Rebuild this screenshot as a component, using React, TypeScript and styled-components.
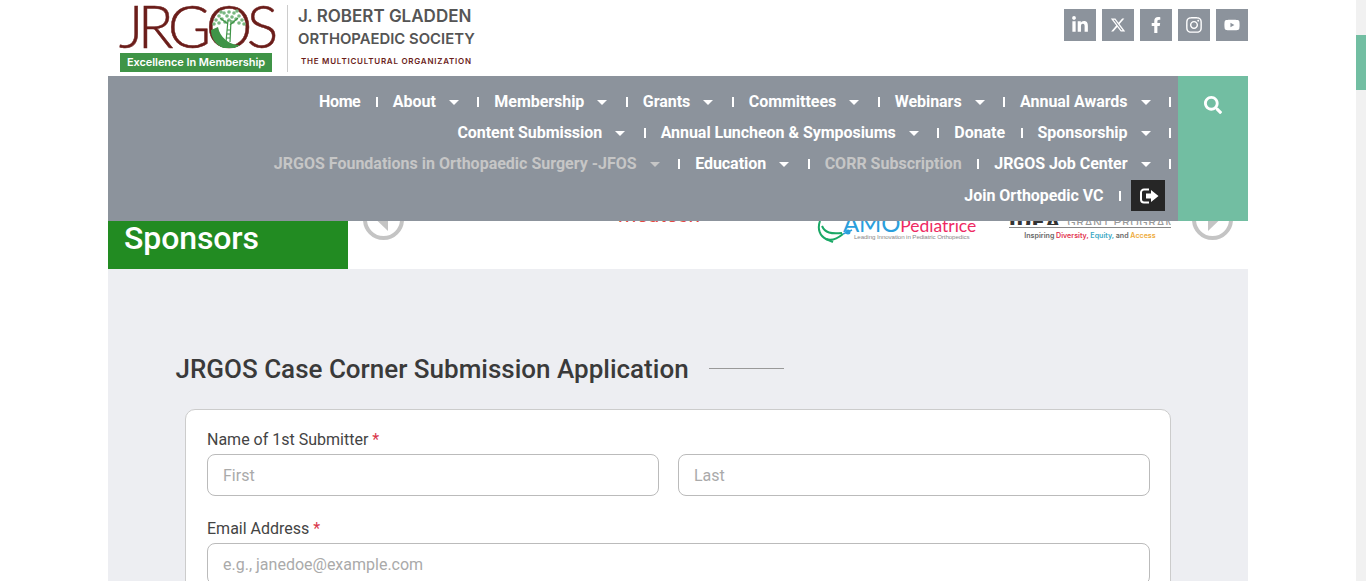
import React from "react";
import styled, { createGlobalStyle } from "styled-components";
import { FaLinkedinIn, FaFacebookF, FaInstagram, FaYoutube, FaSearch } from "react-icons/fa";
import { FaXTwitter } from "react-icons/fa6";

const Global = createGlobalStyle`
  html, body { margin: 0; padding: 0; background: #fff; overflow: hidden; }
  * { box-sizing: border-box; }
  body { font-family: Roboto, "Liberation Sans", sans-serif; }
`;

const Page = styled.div`
  width: 1366px; height: 581px; display: flex; overflow: hidden; background: #fff;
`;
const Main = styled.main`
  width: 1356px; height: 581px; padding-left: 108px; overflow: hidden;
`;
const ScrollTrack = styled.aside`
  width: 10px; height: 581px; background: #f1f1f1; padding-top: 35px;
`;
const ScrollThumb = styled.div`
  width: 10px; height: 55px; background: #72bea2;
`;
const Container = styled.div`
  width: 1140px;
`;
const TopBar = styled.header`
  height: 76px; display: flex; justify-content: space-between; padding-left: 12px;
`;
const Brand = styled.div`
  display: flex; align-items: flex-start;
`;
const LogoBlock = styled.div`
  width: 154px; padding-top: 53px; position: relative;
`;
const LogoWord = styled.div`
  position: absolute; left: 0; top: 4px; height: 44px; width: 154px;
`;
const LogoText = styled.span`
  position: absolute; left: -1px; top: -8px; white-space: nowrap;
  font-family: Lato, sans-serif; font-size: 59px; line-height: 59px; font-weight: 300; color: #6b1d1a; letter-spacing: -5.6px;
  -webkit-text-stroke: 0.5px #6b1d1a;
`;
const LogoTree = styled.svg`
  position: absolute; left: 89px; top: 2px;
`;
const Tagline = styled.div`
  width: 152px; height: 19px; background: #3f9447; color: #fff; display: flex; align-items: center; justify-content: center; padding-bottom: 2px;
  font-family: Inter, sans-serif; font-size: 11px; font-weight: 600; white-space: nowrap; letter-spacing: -0.06px;
`;
const Divider = styled.div`
  width: 1px; height: 67px; margin: 5px 10px 0 13px; background: #ccc;
`;
const BrandText = styled.div`
  display: flex; flex-direction: column; padding-top: 6px; color: #555; font-family: Inter, sans-serif; white-space: nowrap;
`;
const BrandTitle = styled.div`
  font-size: 17px; line-height: 20px; font-weight: 600;
`;
const BrandSub = styled.div`
  font-size: 14.85px; line-height: 20px; font-weight: 600; margin-top: 3px;
`;
const BrandTag = styled.div`
  font-size: 8px; line-height: 10px; font-weight: 600; letter-spacing: 0.75px; color: #6b1d1a; margin: 7px 0 0 3px;
`;
const Socials = styled.div`
  display: flex; gap: 6px; padding-top: 9px;
`;
const Social = styled.a<{ $s: number }>`
  width: 32px; height: 32px; background: #8c939c; color: #fff; display: flex; align-items: center; justify-content: center; font-size: ${p => p.$s}px;
`;
const NavWrap = styled.div`
  display: flex; height: 145px;
`;
const Nav = styled.nav`
  width: 1070px; padding: 10px 7px 0 0; background: #8c939c;
`;
const NavRow = styled.div`
  display: flex; justify-content: flex-end; align-items: center; height: 31px;
`;
const LastRow = styled(NavRow)`
  margin-top: 1px;
`;
const NavItem = styled.a<{ $muted?: boolean; $tight?: boolean }>`
  display: flex; align-items: center; font-size: 16px; font-weight: 700; white-space: nowrap;
  letter-spacing: ${p => (p.$tight ? "-0.4px" : p.$muted ? "0" : "-0.04px")};
  color: ${p => (p.$muted ? "#c6c6c6" : "#fff")};
`;
const Caret = styled.i`
  width: 0; height: 0; margin: 1px 18.5px 0 13px; border-style: solid; border-width: 5px 5px 0 5px; border-color: currentColor transparent transparent;
`;
const Sep = styled.i<{ $plain?: boolean }>`
  width: 2px; height: 10px; background: #fff; margin-left: ${p => (p.$plain ? "15.5px" : "0")}; margin-right: 15px;
`;
const LastSep = styled(Sep)`
  margin-right: 0;
`;
const LogoutSep = styled(Sep)`
  margin-right: 10px;
`;
const Logout = styled.a`
  width: 34px; height: 31px; margin: 0 6px 0 0; padding-left: 3px; background: #262626; display: flex; align-items: center; justify-content: center;
`;
const SearchPane = styled.div`
  width: 70px; background: #72bea2; color: #fff; display: flex; justify-content: center; padding-top: 20px; font-size: 18px;
`;
const SponsorBand = styled.section`
  height: 48px; display: flex; overflow: hidden; background: #fff;
`;
const SponsorTitle = styled.div`
  width: 240px; background: #228b22; color: #fff; font-size: 32px; font-weight: 500; padding-left: 16px; line-height: 35px; letter-spacing: -0.1px;
`;
const Carousel = styled.div`
  flex: 1; display: flex; align-items: flex-start; padding-left: 15px;
`;
const Arrow = styled.svg`
  flex: none; margin-top: -22px;
`;
const MedText = styled.div`
  width: 413px; flex: none; margin-top: -13px; text-align: right; padding-right: 117px; font-size: 21px; line-height: 14px; color: #e8483f;
`;
const AmoLogo = styled.div`
  width: 160px; flex: none; position: relative; display: flex; flex-direction: column; padding-left: 37px; color: #8a8a8a;
`;
const AmoIcon = styled.svg`
  position: absolute; left: 0; top: 0;
`;
const AmoScript = styled.div`
  margin: -8px 0 0 -11px; height: 19px; white-space: nowrap; font-family: Lato, sans-serif; font-weight: 400; font-size: 24px; line-height: 19px; color: #2b9fdc; letter-spacing: -0.2px;
`;
const AmoPink = styled.span`
  color: #ee2a63; font-size: 17.5px; letter-spacing: 0;
`;
const AmoSub = styled.div`
  font-family: "Liberation Sans", sans-serif; font-size: 6.2px; line-height: 8px; white-space: nowrap; margin-top: 1px; letter-spacing: -0.1px;
`;
const IdeaLogo = styled.div`
  width: 162px; margin: 0 21px 0 32px; display: flex; flex-direction: column; flex: none;
`;
const IdeaTop = styled.div`
  height: 4px; overflow: hidden; display: flex; gap: 6px; align-items: flex-end; white-space: nowrap;
`;
const IdeaMark = styled.span`
  font-size: 22px; font-weight: 900; color: #333; line-height: 4px; letter-spacing: 1px; height: 4px;
`;
const IdeaGrant = styled.span`
  font-size: 12.5px; color: #999; line-height: 4px; letter-spacing: 0.5px;
`;
const IdeaRule = styled.div`
  height: 1px; margin-top: 2px; background: #888;
`;
const IdeaLine = styled.div`
  margin-top: 3px; text-align: center; font-size: 7.1px; line-height: 9px; font-weight: 600; font-family: Inter, sans-serif; color: #666; white-space: nowrap;
`;
const Tone = styled.span<{ $c: string }>`
  color: ${p => p.$c};
`;
const Content = styled.section`
  height: 312px; background: #edeef2; padding: 82px 77px 0 67.5px;
`;
const Heading = styled.div`
  display: flex; align-items: center; gap: 20.5px; height: 37px;
`;
const HeadingText = styled.h1`
  margin: 0; font-size: 26px; font-weight: 500; color: #3a3a3a; line-height: 37px; white-space: nowrap;
`;
const HeadingLine = styled.div`
  width: 75px; height: 1px; background: #999; margin-top: -2px;
`;
const FormCard = styled.form`
  margin: 21px 0 0 9.5px; height: 300px; background: #fff; border: 1px solid #ccc; border-radius: 10px; padding: 20px 20px 0 21px;
`;
const Field = styled.div`
  margin-bottom: 23px;
`;
const Label = styled.label`
  display: block; font-size: 16px; line-height: 19px; color: #444; margin-bottom: 5px;
`;
const Star = styled.span`
  color: #d9364a;
`;
const NameInputs = styled.div`
  display: grid; grid-template-columns: 452px 472px; gap: 19px;
`;
const Input = styled.input`
  display: block; min-width: 0; width: 100%; height: 42px; border: 1px solid #bbb; border-radius: 8px; padding: 0 15px; font: 400 16px Roboto, sans-serif; background: #fff; outline: none;
  &::placeholder { color: #aaa; opacity: 1; }
`;

const Ring = ({ dir }: { dir: "l" | "r" }) => (
  <Arrow width="41" height="41" viewBox="0 0 41 41" aria-hidden="true">
    <circle cx="20.5" cy="20.5" r="18.5" fill="none" stroke="#c4c4c4" strokeWidth="4" />
    <polygon points={dir === "l" ? "25,9 13,20.5 25,32" : "16,9 28,20.5 16,32"} fill="#c4c4c4" />
  </Arrow>
);

const leaves: [number, number][] = [
  [20, 6], [15, 7], [25, 7], [10, 10], [30, 10], [18, 10], [23, 11], [13, 13], [27, 13], [7, 14], [33, 14],
  [20, 14], [10, 17], [16, 16], [24, 16], [30, 17], [5, 18], [35, 18], [12, 6], [28, 5],
];

const rows: { t: string; c?: boolean; m?: boolean }[][] = [
  [{ t: "Home" }, { t: "About", c: true }, { t: "Membership", c: true }, { t: "Grants", c: true }, { t: "Committees", c: true }, { t: "Webinars", c: true }, { t: "Annual Awards", c: true }],
  [{ t: "Content Submission", c: true }, { t: "Annual Luncheon & Symposiums", c: true }, { t: "Donate" }, { t: "Sponsorship", c: true }],
  [{ t: "JRGOS Foundations in Orthopaedic Surgery -JFOS", c: true, m: true }, { t: "Education", c: true }, { t: "CORR Subscription", m: true }, { t: "JRGOS Job Center", c: true }],
];

export default function App() {
  return (
    <Page>
      <Global />
      <Main>
        <Container>
          <TopBar>
            <Brand>
              <LogoBlock>
                <LogoWord>
                  <LogoText>JRGOS</LogoText>
                  <LogoTree width="40" height="42" viewBox="0 0 40 42" aria-hidden="true">
                    <path d="M2 24 A18 18 0 0 0 31 39 A22 22 0 0 1 9 21 Z" fill="#3f9447" />
                    <path d="M5 20 A15 15 0 0 1 35 20 Z" fill="#fff" />
                    <g fill="#79b881">
                      {leaves.map(([x, y]) => <circle key={`${x}-${y}`} cx={x} cy={y} r="1.8" />)}
                    </g>
                    <path d="M19 14 L17 36 M22 14 L21 36 M17.5 24 H21.5 M17.5 28 H21.5 M17.3 32 H21.2 M19 18 L11 12 M21 19 L29 12" stroke="#3f9447" strokeWidth="1.2" fill="none" />
                  </LogoTree>
                </LogoWord>
                <Tagline>Excellence In Membership</Tagline>
              </LogoBlock>
              <Divider />
              <BrandText>
                <BrandTitle>J. ROBERT GLADDEN</BrandTitle>
                <BrandSub>ORTHOPAEDIC SOCIETY</BrandSub>
                <BrandTag>THE MULTICULTURAL ORGANIZATION</BrandTag>
              </BrandText>
            </Brand>
            <Socials>
              <Social $s={18}><FaLinkedinIn /></Social>
              <Social $s={16}><FaXTwitter /></Social>
              <Social $s={16}><FaFacebookF /></Social>
              <Social $s={18}><FaInstagram /></Social>
              <Social $s={16}><FaYoutube /></Social>
            </Socials>
          </TopBar>
          <NavWrap>
            <Nav>
              {rows.map((r, i) => (
                <NavRow key={i}>
                  {r.map((it, j) => (
                    <NavItem key={it.t} $muted={it.m} $tight={it.t === "Home"}>
                      {it.t}
                      {it.c && <Caret />}
                      {j === r.length - 1 ? <LastSep $plain={!it.c} /> : <Sep $plain={!it.c} />}
                    </NavItem>
                  ))}
                </NavRow>
              ))}
              <LastRow>
                <NavItem>
                  Join Orthopedic VC
                  <LogoutSep $plain />
                </NavItem>
                <Logout>
                  <svg width="19" height="16" viewBox="0 0 19 16" aria-hidden="true">
                    <path d="M9 1.5H4a3 3 0 0 0-3 3v7a3 3 0 0 0 3 3h5" fill="none" stroke="#fff" strokeWidth="2" />
                    <polygon points="6,5.5 11,5.5 11,2 18.5,8 11,14 11,10.5 6,10.5" fill="#fff" />
                  </svg>
                </Logout>
              </LastRow>
            </Nav>
            <SearchPane><FaSearch /></SearchPane>
          </NavWrap>
          <SponsorBand>
            <SponsorTitle>Sponsors</SponsorTitle>
            <Carousel>
              <Ring dir="l" />
              <MedText>medtech</MedText>
              <AmoLogo>
                <AmoIcon width="36" height="22" viewBox="0 0 36 22" aria-hidden="true">
                  <path d="M3 0 C0 8 3 15 9 18 C14 20 20 18 26 13" fill="none" stroke="#1aa866" strokeWidth="2" />
                  <path d="M5 5 C8 12 14 13 25 12 M9 18 L16 21" fill="none" stroke="#1aa866" strokeWidth="2" />
                  <circle cx="31" cy="11" r="2.5" fill="#2b9fdc" />
                  <path d="M26 13 L35 9" stroke="#2b9fdc" strokeWidth="1.5" />
                </AmoIcon>
                <AmoScript>AMO<AmoPink>Pediatrice</AmoPink></AmoScript>
                <AmoSub>Leading Innovation in Pediatric Orthopedics</AmoSub>
              </AmoLogo>
              <IdeaLogo>
                <IdeaTop>
                  <IdeaMark>IDEA</IdeaMark>
                  <IdeaGrant>GRANT PROGRAM</IdeaGrant>
                </IdeaTop>
                <IdeaRule />
                <IdeaLine>
                  Inspiring <Tone $c="#e2354f">Diversity,</Tone> <Tone $c="#3ba8c4">Equity,</Tone> and <Tone $c="#eeab3a">Access</Tone>
                </IdeaLine>
              </IdeaLogo>
              <Ring dir="r" />
            </Carousel>
          </SponsorBand>
          <Content>
            <Heading>
              <HeadingText>JRGOS Case Corner Submission Application</HeadingText>
              <HeadingLine />
            </Heading>
            <FormCard>
              <Field>
                <Label>Name of 1st Submitter <Star>*</Star></Label>
                <NameInputs>
                  <Input placeholder="First" />
                  <Input placeholder="Last" />
                </NameInputs>
              </Field>
              <Field>
                <Label>Email Address <Star>*</Star></Label>
                <Input placeholder="e.g., janedoe@example.com" />
              </Field>
            </FormCard>
          </Content>
        </Container>
      </Main>
      <ScrollTrack><ScrollThumb /></ScrollTrack>
    </Page>
  );
}
